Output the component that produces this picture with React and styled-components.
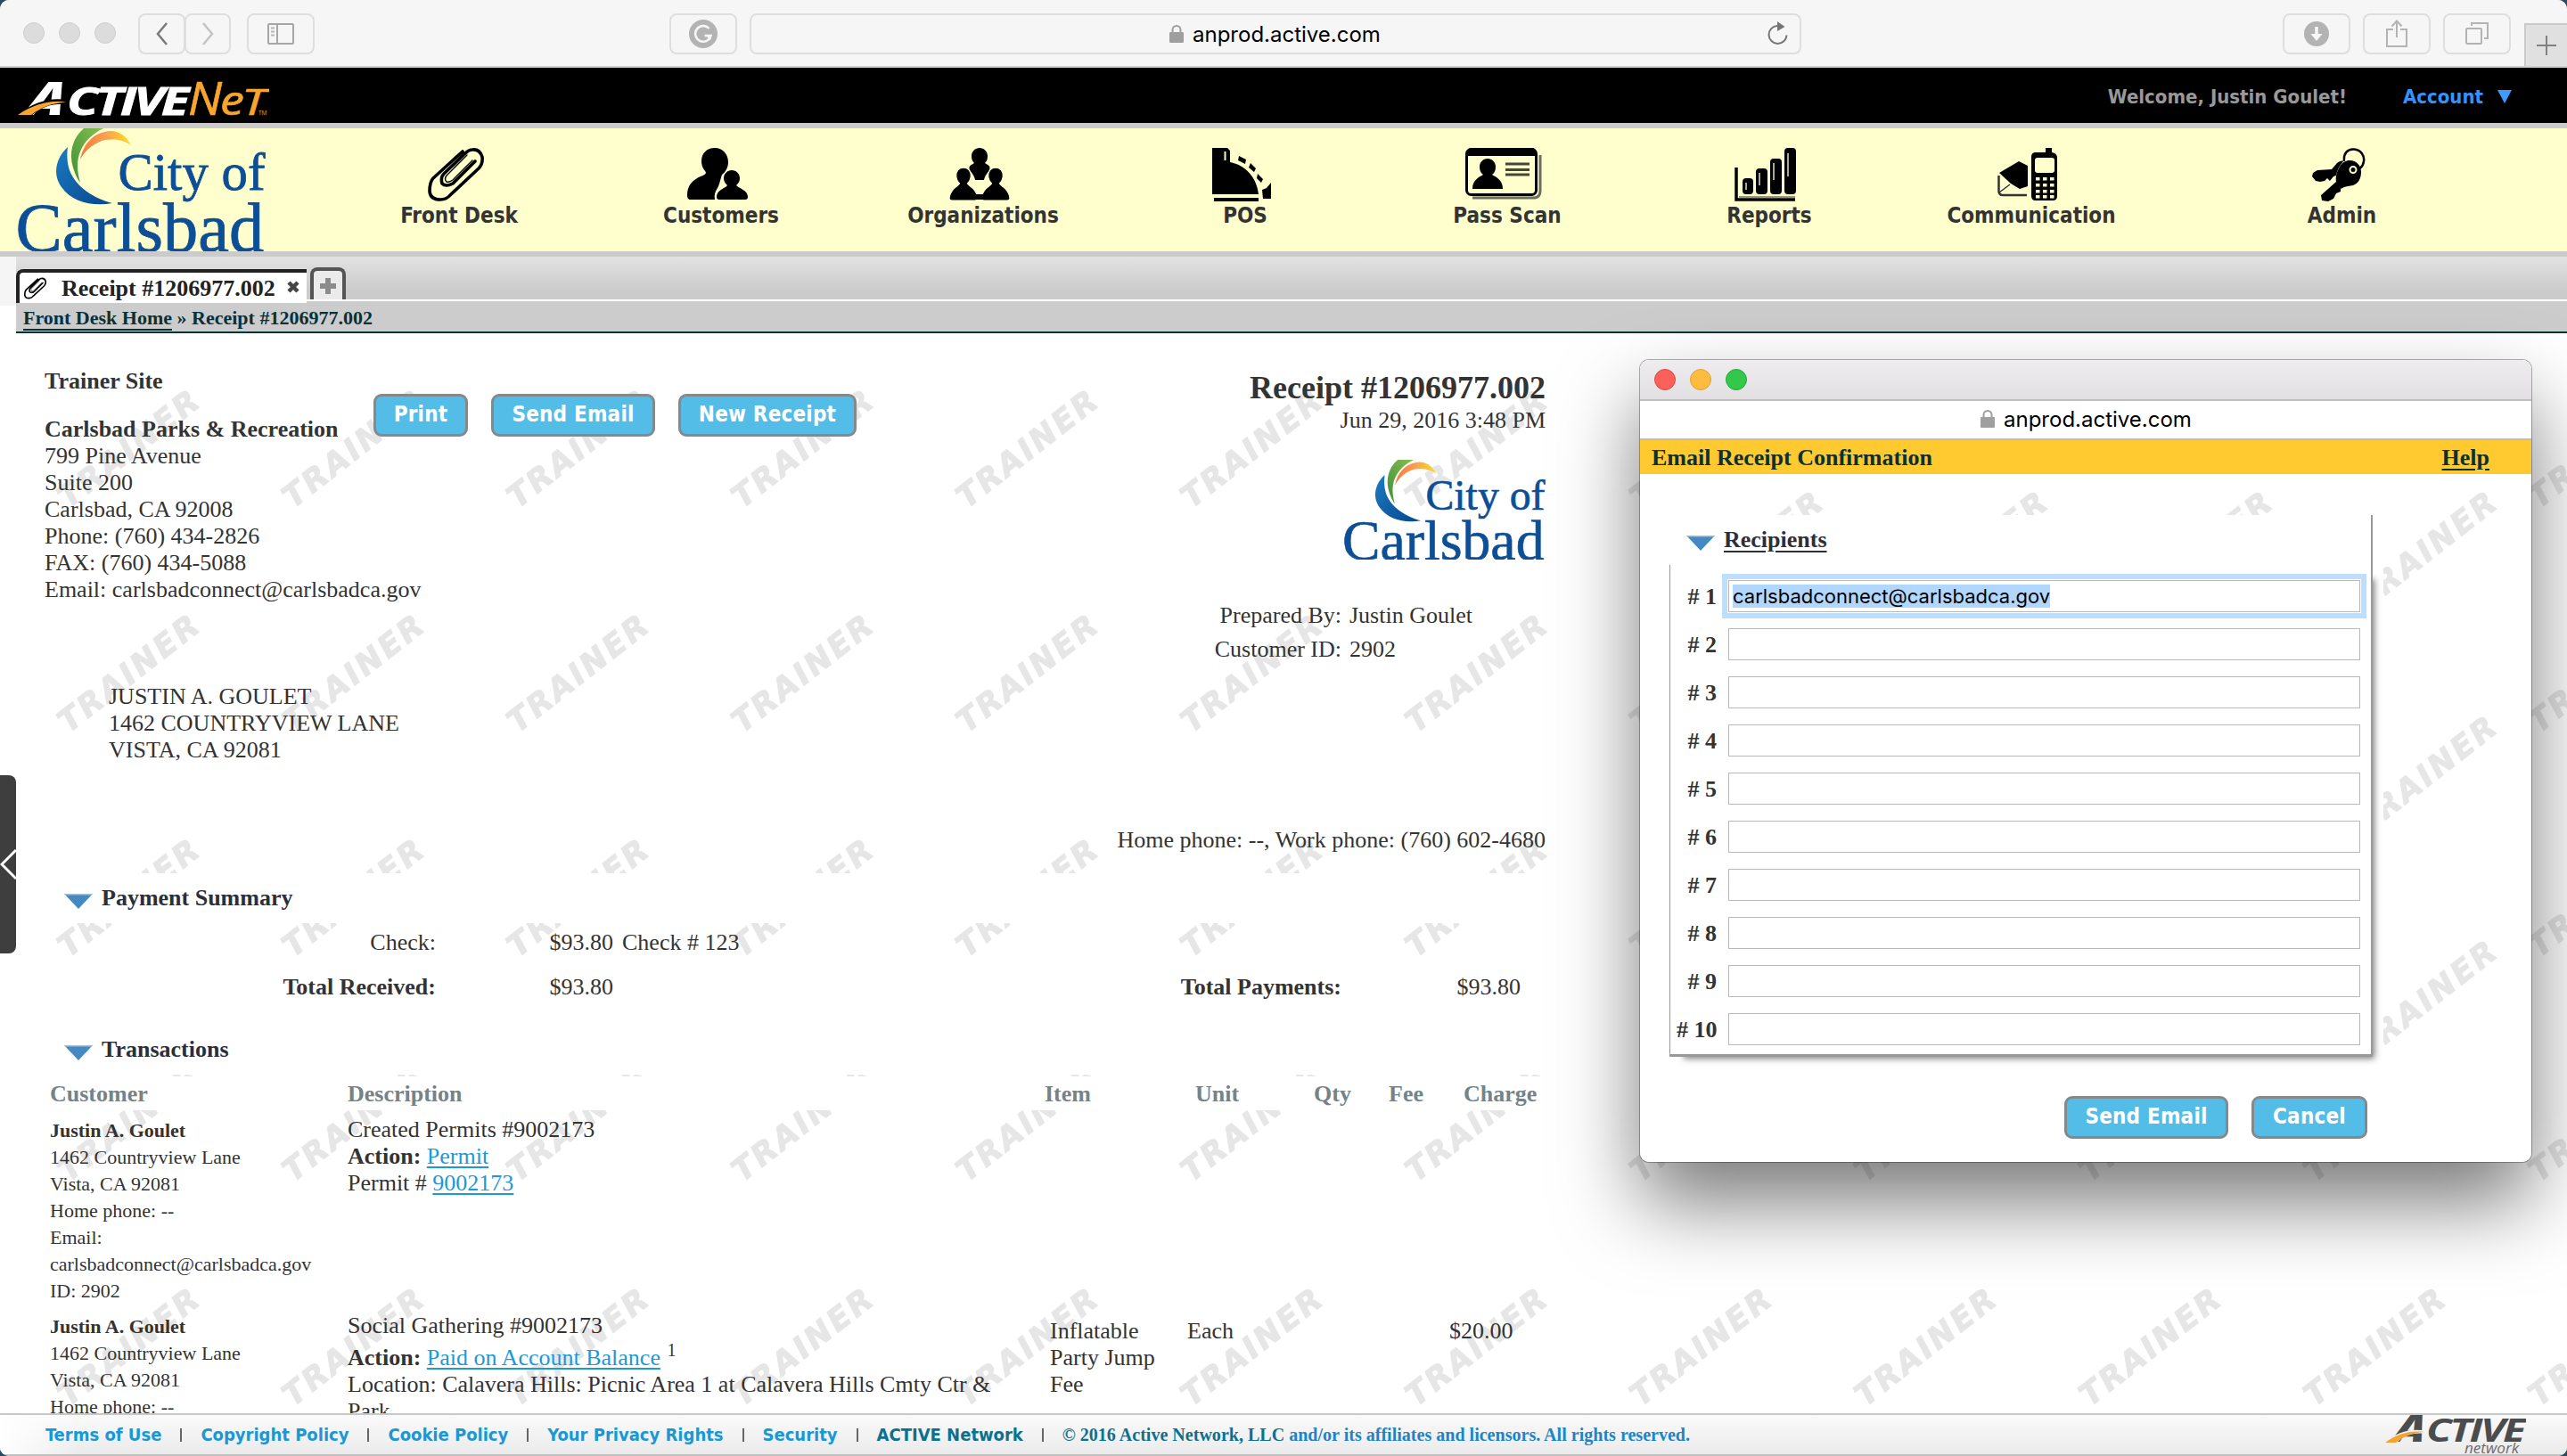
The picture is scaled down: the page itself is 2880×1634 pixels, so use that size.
import React from "react";
import styled, { createGlobalStyle, css } from "styled-components";

const serif = '"Liberation Serif", "Times New Roman", serif';
const tahoma = '"DejaVu Sans Condensed", "DejaVu Sans", Tahoma, sans-serif';
const system = 'Inter, Roboto, sans-serif';

const GlobalStyle = createGlobalStyle`
  *, *::before, *::after { box-sizing: border-box; }
  html, body { margin: 0; padding: 0; background: #2b4a60; }
  svg { display: block; flex: none; }
`;

const BrowserWindow = styled.div`
  position: relative;
  display: flex;
  flex-direction: column;
  width: 2880px;
  height: 1634px;
  overflow: hidden;
  border-radius: 10px;
  background: #fff;
  color: #333;
  font: 26px/30px ${serif};
`;

/* ---------- Browser toolbar ---------- */

const Toolbar = styled.header`
  display: flex;
  flex: none;
  align-items: flex-start;
  height: 76px;
  padding: 15px 0 0 26px;
  background: #f6f6f6;
  border-bottom: 2px solid #d0d1d0;
`;

const Lights = styled.div`
  display: flex;
  gap: 16px;
  padding-top: 10px;
`;

const Light = styled.span`
  width: 24px;
  height: 24px;
  border-radius: 50%;
  background: ${(p) => p.$fill || "#dcdcdc"};
  border: 1px solid ${(p) => p.$edge || "#cecece"};
`;

const ToolButton = styled.div`
  display: flex;
  align-items: center;
  justify-content: center;
  width: ${(p) => p.$w || 76}px;
  height: 46px;
  margin-left: ${(p) => p.$ml || 0}px;
  border: 2px solid #dedede;
  border-radius: 8px;
`;

const AddressField = styled.div`
  display: flex;
  align-items: center;
  width: 1180px;
  height: 46px;
  margin-left: 14px;
  padding: 0 12px 0 469px;
  border: 2px solid #dedede;
  border-radius: 8px;
`;

const Host = styled.span`
  margin-left: 10px;
  padding-top: 2px;
  color: #000;
  font: 24px/30px ${system};
`;

const Reload = styled.div`
  margin-left: auto;
`;

const ToolGroup = styled.div`
  display: flex;
  gap: 14px;
  margin-left: 540px;
`;

const NewTab = styled.div`
  display: flex;
  align-items: center;
  justify-content: center;
  width: 48px;
  height: 48px;
  margin: 11px 0 0 auto;
  background: #e0e0e0;
  border-top: 2px solid #cacaca;
  border-left: 2px solid #cacaca;
`;

/* ---------- Site header ---------- */

const BrandBar = styled.div`
  display: flex;
  flex: none;
  align-items: center;
  height: 62px;
  padding: 0 62px 0 20px;
  background: #000;
`;

const Welcome = styled.span`
  margin: 3px 0 0 auto;
  color: #999;
  font: bold 22px/30px ${tahoma};
`;

const AccountMenu = styled.div`
  display: flex;
  align-items: center;
  gap: 16px;
  margin: 3px 0 0 63px;
  color: #3393ff;
  font: bold 22px/30px ${tahoma};
`;

const MainNav = styled.nav`
  display: flex;
  flex: none;
  height: 150px;
  padding-left: 20px;
  background: #ffffce;
  border-top: 6px solid #cbcbcb;
  border-bottom: 6px solid #cbcbcb;
`;

const NavItems = styled.div`
  display: flex;
  margin-left: 70px;
`;

const NavItem = styled.div`
  display: flex;
  flex-direction: column;
  align-items: center;
  width: ${(p) => p.$w || 294}px;
  padding-top: 22px;
  color: #333;
  font: bold 24px/32px ${tahoma};
  svg { margin-right: 8px; }
`;

const TabStrip = styled.div`
  display: flex;
  flex: none;
  align-items: flex-start;
  height: 50px;
  margin-left: 18px;
  background: linear-gradient(#e2e2e2, #cbcbcb 80%) 0 0 / 100% 48px no-repeat #fff;
`;

const PageTab = styled.div`
  position: relative;
  display: flex;
  align-items: center;
  width: 326px;
  height: 38px;
  margin: 14px 0 -2px;
  padding-left: 5px;
  background: #fff;
  border-top: 4px solid #222;
  border-left: 4px solid #222;
  border-top-left-radius: 8px;
  color: #222;
  font-weight: bold;
  white-space: nowrap;
  svg + span { margin: 2px 13px 0 17px; }
  svg:last-child { margin-top: -3px; }
`;

const AddTab = styled.div`
  display: flex;
  justify-content: center;
  width: 40px;
  height: 36px;
  margin: 12px 0 0 4px;
  padding-top: 8px;
  background: #ebebeb;
  border: 4px solid #555;
  border-bottom: 0;
  border-radius: 8px 8px 0 0;
`;

const Gutter = styled.div`
  flex: none;
  background: linear-gradient(#f5f5f5, #f5f5f5) 0 0 / 18px 55px no-repeat;
`;

const Breadcrumb = styled.div`
  height: 36px;
  margin-left: 18px;
  padding: 3px 0 0 8px;
  background: #ccc;
  border-bottom: 2px solid #0a3239;
  color: #0a3038;
  font: bold 22px/32px ${serif};
`;

const Crumb = styled.span`
  border-bottom: 2px solid #0a3038;
`;

/* ---------- Receipt page ---------- */

const Page = styled.main`
  position: relative;
  flex: none;
  height: 1212px;
  overflow: hidden;
`;

const WatermarkLayer = styled.svg`
  position: absolute;
  inset: 0;
  width: 100%;
  height: 100%;
`;

const Receipt = styled.div`
  position: relative;
  width: 1736px;
`;

const ReceiptHead = styled.section`
  display: flex;
  height: 606px;
  padding: 39px 2px 0 50px;
`;

const SiteColumn = styled.div`
  width: 369px;
  white-space: nowrap;
`;

const SiteName = styled.div`
  margin-bottom: 24px;
  font-weight: bold;
`;

const Strong = styled.b``;

const Lines = styled.div`
  margin: ${(p) => p.$m || 0};
`;

const ButtonRow = styled.div`
  display: flex;
  align-items: flex-start;
  gap: 26px;
  padding-top: ${(p) => p.$pt || 0}px;
`;

const ActionButton = styled.div`
  width: ${(p) => p.$w}px;
  height: 48px;
  background: #53bde8;
  border: 3px solid #85898b;
  border-radius: 9px;
  color: #fff;
  font: bold 24px/40px ${tahoma};
  letter-spacing: 0.2px;
  text-align: center;
`;

const InfoColumn = styled.div`
  display: flex;
  flex: 1;
  flex-direction: column;
  align-items: flex-end;
`;

const ReceiptNumber = styled.div`
  font: bold 36px/44px ${serif};
`;

const LogoSlot = styled.div`
  margin: 29px 0 48px;
`;

const MetaGrid = styled.div`
  display: grid;
  grid-template-columns: auto 220px;
  grid-auto-rows: 38px;
  column-gap: 9px;
  margin-bottom: 176px;
  text-align: right;
`;

const MetaValue = styled.span`
  text-align: left;
`;

const SectionBar = styled.div`
  display: flex;
  height: 56px;
  padding: 13px 0 0 72px;
  background: #fff;
  color: #2b2f3a;
  font-weight: bold;
  svg { margin: 10px 10px 0 0; }
`;

const PaymentTable = styled.div`
  display: grid;
  grid-template-columns: 489px 199px 300px 517px 201px;
  grid-auto-rows: 50px;
  height: 114px;
  padding-top: 7px;
  text-align: right;
`;

const Note = styled.span`
  padding-left: 10px;
  text-align: left;
`;

const rowGrid = css`
  display: grid;
  grid-template-columns: 334px 782px 160px 138px 82px 72px 112px;
  padding-left: 56px;
`;

const TableHead = styled.div`
  ${rowGrid}
  height: 38px;
  margin-top: 2px;
  padding-top: 5px;
  background: #fff;
  color: #738388;
  font-weight: bold;
`;

const Cell = styled.div`
  padding-left: ${(p) => p.$pl || 0}px;
`;

const TableRow = styled.div`
  ${rowGrid}
  height: 220px;
  padding-top: 7px;
`;

const CustomerCell = styled.div`
  padding-top: 1px;
  font-size: 22px;
`;

const DescriptionCell = styled.div`
  max-width: 740px;
`;

const DetailCell = styled.div`
  padding: 6px 10px 0 ${(p) => p.$pl || 0}px;
`;

const Link = styled.span`
  color: #1a9ad6;
  text-decoration: underline;
  text-decoration-thickness: 2px;
  text-underline-offset: 3px;
`;

const ActionLine = styled.div`
  padding-top: ${(p) => p.$pt || 0}px;
`;

const FootnoteMark = styled.sup`
  display: inline-block;
  font-size: 20px;
  line-height: 20px;
  vertical-align: 10px;
  height: 20px;
  margin: -10px 0 0 1px;
`;

const DrawerHandle = styled.div`
  position: absolute;
  left: 0;
  top: 496px;
  display: flex;
  align-items: center;
  width: 18px;
  height: 200px;
  background: #3e3e3e;
  border-radius: 0 8px 8px 0;
`;

/* ---------- Footer ---------- */

const Footer = styled.footer`
  display: flex;
  flex: none;
  height: 48px;
  padding-left: 51px;
  background: linear-gradient(90deg, #fff 0, rgba(255, 255, 255, 0) 90px),
    linear-gradient(#fafafa, #ebebeb);
  border-top: 2px solid #c8c8c8;
  border-bottom: 2px solid #c0c0c0;
`;

const FooterLinks = styled.div`
  display: flex;
  gap: 21px;
  align-items: center;
  color: #1a98d3;
  font: bold 20px/30px ${tahoma};
`;

const Divider = styled.i`
  width: 2px;
  height: 15px;
  background: #666;
`;

const NetworkName = styled.span`
  color: #0c708f;
`;

const Copyright = styled.span`
  color: #1a85c9;
  font: bold 20px/30px ${serif};
  letter-spacing: 0.02px;
`;

const FooterLogo = styled.div`
  margin: 0 46px 0 auto;
`;

/* ---------- Email popup ---------- */

const Popup = styled.aside`
  position: absolute;
  left: 1840px;
  top: 404px;
  display: flex;
  flex-direction: column;
  width: 1000px;
  height: 900px;
  overflow: hidden;
  background: #fff;
  border-radius: 10px;
`;

const PopupShadow = styled.div`
  position: absolute;
  left: 1840px;
  top: 404px;
  width: 1000px;
  height: 900px;
  border-radius: 10px;
  box-shadow: 0 0 0 1px rgba(0, 0, 0, 0.3), 0 46px 90px rgba(0, 0, 0, 0.52);
`;

const TitleBar = styled.div`
  display: flex;
  gap: 16px;
  flex: none;
  height: 46px;
  padding: 10px 16px;
  background: linear-gradient(#eeecee, #e2e0e2);
  border-bottom: 2px solid #c0bfc0;
`;

const PopupAddress = styled.div`
  display: flex;
  flex: none;
  align-items: center;
  height: 44px;
  padding-left: 382px;
  padding-bottom: 2px;
  border-bottom: 2px solid #bdbdbd;
`;

const PopupHeading = styled.div`
  display: flex;
  flex: none;
  justify-content: space-between;
  height: 38px;
  padding: 5px 47px 0 13px;
  background: #ffc930;
  color: #0a3038;
  font-weight: bold;
`;

const Underlined = styled.span`
  text-decoration: underline;
  text-decoration-thickness: 2px;
  text-underline-offset: 4px;
`;

const PopupBody = styled.div`
  position: relative;
  flex: 1;
  padding: 46px 0 0 33px;
`;

const RecipientsPanel = styled.div`
  position: relative;
  width: 801px;
  height: 620px;
  padding-right: 12px;
  background: #fff;
`;

const PanelTitle = styled.div`
  display: flex;
  width: 789px;
  height: 56px;
  padding: 13px 0 0 19px;
  border-right: 2px solid #999;
  color: #2b2f3a;
  font-weight: bold;
  svg { margin: 10px 10px 0 0; }
`;

const PanelRows = styled.div`
  display: flex;
  flex-direction: column;
  gap: 18px;
  width: 789px;
  height: 552px;
  padding: 17px 0 0 7px;
  background: #fff;
  border: 1px solid #999;
  border-top: 0;
  border-width: 0 2px 3px 1px;
  box-shadow: 9px 9px 7px -7px rgba(0, 0, 0, 0.5);
`;

const RecipientRow = styled.label`
  display: flex;
  align-items: center;
  gap: 13px;
  height: 36px;
  font-weight: bold;
`;

const RecipientLabel = styled.span`
  width: 45px;
  padding-top: 1px;
  text-align: right;
  white-space: nowrap;
`;

const Field = styled.div`
  width: 709px;
  height: 36px;
  padding: 4px;
  background: #fff;
  border: 1px solid #b9b9b9;
  box-shadow: ${(p) => (p.$focused ? "0 0 0 1px #fff, 0 0 0 7px #bfdefe" : "none")};
  color: #000;
  font: 22px/26px ${system};
`;

const Selection = styled.span`
  display: inline-block;
  height: 26px;
  background: #b2d7fe;
`;

const PopupButtons = styled.div`
  position: relative;
  display: flex;
  gap: 26px;
  padding: 32px 0 0 443px;
`;

/* ---------- Drawings ---------- */

function Watermark({ id, x, y }) {
  return (
    <WatermarkLayer aria-hidden="true">
      <defs>
        <pattern id={id} width="252" height="252" patternUnits="userSpaceOnUse">
          <text
            transform={`translate(${x} ${y}) rotate(-38) skewX(-10)`}
            fontFamily="DejaVu Sans, Verdana, sans-serif"
            fontWeight="bold"
            fontSize="35"
            letterSpacing="3"
            fill="#e6e6e6"
            stroke="#e6e6e6"
            strokeWidth="1"
          >
            TRAINER
          </text>
        </pattern>
      </defs>
      <rect width="100%" height="100%" fill={`url(#${id})`} />
    </WatermarkLayer>
  );
}

function CarlsbadLogo({ id, width, height }) {
  return (
    <svg width={width} height={height} viewBox="0 0 278 138" preserveAspectRatio="none">
      <defs>
        <linearGradient id={`${id}-b`} x1="0" y1="0" x2="1" y2="1">
          <stop offset="0" stopColor="#1b7cc4" />
          <stop offset="1" stopColor="#08468c" />
        </linearGradient>
        <linearGradient id={`${id}-g`} x1="0" y1="1" x2="1" y2="0">
          <stop offset="0" stopColor="#3f8f3c" />
          <stop offset="1" stopColor="#86c04e" />
        </linearGradient>
        <linearGradient id={`${id}-o`}>
          <stop offset="0" stopColor="#f5793f" />
          <stop offset="0.5" stopColor="#f9a052" />
          <stop offset="1" stopColor="#ffdc24" />
        </linearGradient>
      </defs>
      <path d="M56 21C42 34 39 52 49 66C61 83 84 88 106 84C86 79 65 66 58 47C55 38 55 29 56 21Z" fill={`url(#${id}-b)`} />
      <path d="M74 0C61 11 57 28 62 44C64 51 67 57 70 61C66 47 66 36 70 26C75 14 84 6 96 0Z" fill={`url(#${id}-g)`} />
      <path d="M70 35C74 16 86 4 104 3C114 3 122 9 127 19C117 12 107 12 98 13C86 16 76 24 70 35Z" fill={`url(#${id}-o)`} />
      <g fill="#0d4f96" stroke="#0d4f96" strokeWidth="0.8" fontFamily="Liberation Serif, serif">
        <text x="112.5" y="69" fontSize="58.8">City of</text>
        <text x="-2.5" y="137.5" fontSize="78.4">Carlsbad</text>
      </g>
    </svg>
  );
}

function ActiveNetLogo() {
  return (
    <svg width="282" height="54" viewBox="20 84 282 54" fontFamily="Open Sans, sans-serif" fontStyle="italic">
      <text transform="translate(29 133) skewX(-10)" fontSize="52" fontWeight="800" fill="#fff" textLength="42" lengthAdjust="spacingAndGlyphs">A</text>
      <path d="M18 134C36 119 56 113 74 116L74 121C60 120 48 123 35 134Z" fill="#000" />
      <path d="M20 133C38 121 56 116 74 118.500C58 120 47 124 35 133Z" fill="#f7a52c" />
      <text x="75" y="133" fontSize="43" fontWeight="bold" fill="#fff" stroke="#fff" strokeWidth="0.8" letterSpacing="-2.500" textLength="134" lengthAdjust="spacingAndGlyphs">CTIVE</text>
      <g fill="#f7a52c" stroke="#f7a52c" strokeWidth="0.7">
        <text x="211" y="133" fontSize="51" textLength="38" lengthAdjust="spacingAndGlyphs">N</text>
        <text x="247" y="133" fontSize="45" textLength="27" lengthAdjust="spacingAndGlyphs">e</text>
        <text x="271" y="133" fontSize="41" textLength="28" lengthAdjust="spacingAndGlyphs">T</text>
        <text x="290" y="132.5" fontSize="6.5" fontStyle="normal" strokeWidth="0">TM</text>
      </g>
    </svg>
  );
}

function ActiveNetworkLogo() {
  return (
    <svg width="158" height="44" viewBox="2678 1588 158 44" fontFamily="Open Sans, sans-serif" fontStyle="italic">
      <text transform="translate(2687 1618) skewX(-8)" fontSize="43" fontWeight="800" fill="#4b4c4e" textLength="35" lengthAdjust="spacingAndGlyphs">A</text>
      <path d="M2676 1620C2690 1608 2706 1602 2724 1606L2724 1609C2708 1607 2698 1612 2690 1620Z" fill="#f2f2f2" />
      <path d="M2678 1619C2690 1610 2704 1605 2722 1607C2706 1608 2698 1613 2690 1619Z" fill="#f4a52f" />
      <text x="2724" y="1618" fontSize="36" fontWeight="bold" fill="#4b4c4e" letterSpacing="-2" textLength="109" lengthAdjust="spacingAndGlyphs">CTIVE</text>
      <text x="2767" y="1631" fontSize="17" fill="#6a6b6d" textLength="61" lengthAdjust="spacingAndGlyphs">network</text>
    </svg>
  );
}

const Lock = () => (
  <svg width="16" height="20" viewBox="0 0 16 20">
    <path d="M3.5 9V5.5a4.5 4.5 0 0 1 9 0V9" fill="none" stroke="#9f9f9f" strokeWidth="2" />
    <rect y="8" width="16" height="12" rx="1" fill="#9f9f9f" />
  </svg>
);

const Triangle = () => (
  <svg width="32" height="17" viewBox="0 0 32 17">
    <path d="M0 0H32L16 17Z" fill="#4489c1" />
    <path d="M0 0H32L31 1.5H1Z" fill="#9dc3e2" />
  </svg>
);

function PaperClip({ width, height, wire, line }) {
  return (
    <svg width={width} height={height} viewBox="0 0 63 60" fill="none" strokeLinecap="round" strokeLinejoin="round">
      <path
        d="M39 4L6 34Q2 38 2 49Q3 58 14 58Q21 58 25 53L57 23Q62 18 61 10Q58 1 50 2Q46 2 42 6L18 29Q14 33 16 40Q20 44 28 40L53 15"
        stroke="#000"
        strokeWidth={wire}
      />
      <path d="M44 8L21 31Q18 35 21 38Q24 39 28 36L50 14" stroke="#000" strokeWidth={line} />
    </svg>
  );
}

const Person = ({ x, y, s }) => (
  <g transform={`translate(${x} ${y}) scale(${s})`}>
    <path d="M0 0C8 0 13 6 13 14C13 20 10 25 7 28C8 31 14 33 18 38C22 43 25 50 25 54C25 57 23 58 20 58H-20C-23 58 -25 57 -25 54C-25 50 -22 43 -18 38C-14 33 -8 31 -7 28C-10 25 -13 20 -13 14C-13 6 -8 0 0 0Z" />
  </g>
);

const CustomersIcon = () => (
  <svg width="68" height="60" viewBox="0 0 68 60">
    <path d="M31 0C40 0 46 7 46 16C46 22 43 27 39 30C37 36 36 42 34 45C31 49 30 54 31 58H4C1 58 0 56 0 53C0 42 6 36 15 32C21 30 22 28 20 26C17 22 16 19 16 15C16 6 22 0 31 0Z" />
    <path d="M50 25C55 25 59 29 59 34C59 38 57 40 55 42C57 45 68 47 68 55C68 57 67 58 65 58H36C34 58 33 57 33 55C33 47 42 46 45 42C43 40 41 38 41 34C41 29 45 25 50 25Z" />
  </svg>
);

const OrganizationsIcon = () => (
  <svg width="72" height="60" viewBox="0 0 72 60">
    <path d="M36 0C41 0 45 4 45 9C45 13 44 15 42 17C45 19 49 20 47 25C44 29 42 31 41 36H31C30 31 28 29 25 25C23 20 27 19 30 17C28 15 27 13 27 9C27 4 31 0 36 0Z" />
    <g stroke="#ffffce" strokeWidth="2">
      <Person x={18} y={22} s={0.64} />
      <Person x={54} y={22} s={0.64} />
    </g>
    <path d="M30 52H42V58H30Z" />
  </svg>
);

const PosIcon = () => (
  <svg width="66" height="60" viewBox="0 0 66 60">
    <path d="M0 0H17L20 3V16C37 19 50 33 52 52H0Z" />
    <path d="M14.500 4V14" stroke="#ffffce" strokeWidth="2" />
    <path d="M2 56H52V60H2Z" />
    <path d="M30 9L38 13L37 18L29 14ZM43 17L49 23L47 27L41 22ZM51 29L57 35L55 39L50 34ZM56 47L61 45L66 39V57H57Z" />
  </svg>
);

const PassScanIcon = () => (
  <svg width="86" height="60" viewBox="0 0 86 60">
    <path d="M8 56H78Q84 55 84 48V8" fill="none" stroke="#6e6e5c" strokeWidth="3" />
    <rect x="1.500" y="1.500" width="78" height="51" rx="5" fill="#ffffce" stroke="#000" strokeWidth="3" />
    <path d="M6 0H76Q80 1 80 9H1Q1 1 6 0Z" />
    <path d="M25 12C30 12 34 16 34 21C34 25 33 28 30 30C35 33 42 36 42 46H8C8 36 15 33 20 30C17 28 16 25 16 21C16 16 20 12 25 12Z" />
    <path d="M45 18H72M45 24.500H72M45 30H72" stroke="#45453a" strokeWidth="3" />
  </svg>
);

const ReportsIcon = () => (
  <svg width="70" height="60" viewBox="0 0 70 60">
    <path d="M2 22V58H68" fill="none" stroke="#000" strokeWidth="3.500" />
    <path d="M5 55H68" stroke="#77776a" strokeWidth="1.500" />
    <rect x="9" y="34" width="12" height="18" rx="4" />
    <rect x="24" y="23" width="13" height="29" rx="4" />
    <rect x="40" y="12" width="13" height="40" rx="4" />
    <rect x="56" y="0" width="13" height="52" rx="4" />
    <path d="M13 39V47M28 28V42M44 17V36M60 6V32" stroke="#aaa98a" strokeWidth="2" />
  </svg>
);

const CommunicationIcon = () => (
  <svg width="68" height="60" viewBox="0 0 68 60">
    <path d="M1.500 31V49Q2 53 6 53H33" fill="none" stroke="#333" strokeWidth="2.500" />
    <path d="M2 50L14 41" stroke="#333" strokeWidth="1.500" />
    <path d="M2 28L24 15L34 20V43L25 46L15 40Z" />
    <path d="M54 0H61V5Q67 6 67 11V54Q67 59 62 59H43Q38 59 38 54V10Q38 5 43 5H54Z" />
    <rect x="42" y="11" width="22" height="17" rx="3" fill="#ffffce" />
    <g fill="#ffffce">
      {[33, 40, 47, 53].map((y) =>
        [43, 51, 59].map((x) => <rect key={`${x}-${y}`} x={x} y={y} width="4.500" height="3.500" />)
      )}
    </g>
  </svg>
);

const AdminIcon = () => (
  <svg width="60" height="60" viewBox="0 0 60 60">
    <path d="M36 15C35 6 40 1 47 1.500C55 2 59 9 58 15C57 22 52 25 48 24" fill="none" stroke="#000" strokeWidth="2.500" />
    <path d="M28 17C30 15 34 14 35 15C32 19 29 22 27 31L24 32L20 37L17 34L14 37L9 38L4 37L0 32L1 28L6 25L22 24Z" />
    <path d="M42 14C50 14 55 20 55 27C55 34 52 40 46 42C42 43 38 43 36 44L32 46V49L27 51L24 57L18 60L11 59L10 53L27 38C26 32 28 26 31 21C34 16 38 14 42 14Z" />
    <circle cx="46" cy="24.500" r="3.500" fill="none" stroke="#ffffce" strokeWidth="2" />
  </svg>
);

const navItems = [
  ["Front Desk", <PaperClip key="i" width={63} height={60} wire={3.6} line={1.4} />],
  ["Customers", <CustomersIcon key="i" />],
  ["Organizations", <OrganizationsIcon key="i" />],
  ["POS", <PosIcon key="i" />],
  ["Pass Scan", <PassScanIcon key="i" />],
  ["Reports", <ReportsIcon key="i" />],
  ["Communication", <CommunicationIcon key="i" />],
  ["Admin", <AdminIcon key="i" />, 403],
];

const stroke = (color, width = 2) => ({ fill: "none", stroke: color, strokeWidth: width });

/* ---------- Sections ---------- */

function BrowserToolbar() {
  return (
    <Toolbar>
      <Lights><Light /><Light /><Light /></Lights>
      <ToolButton $w={53} $ml={25}>
        <svg width="14" height="26" viewBox="0 0 14 26"><path d="M12 1L2 13L12 25" {...stroke("#7a7a7a", 2.5)} /></svg>
      </ToolButton>
      <ToolButton $w={52} $ml={-1}>
        <svg width="14" height="26" viewBox="0 0 14 26"><path d="M2 1L12 13L2 25" {...stroke("#c4c4c4", 2.5)} /></svg>
      </ToolButton>
      <ToolButton $ml={18}>
        <svg width="30" height="24" viewBox="0 0 30 24">
          <rect x="1" y="1" width="28" height="22" rx="1" {...stroke("#a6a6a6")} />
          <path d="M11 1V23" {...stroke("#a6a6a6")} />
          <path d="M4 5.500H8M4 9.500H8M4 13.500H8" {...stroke("#b6b6b6")} />
        </svg>
      </ToolButton>
      <ToolButton $ml={398}>
        <svg width="32" height="32" viewBox="0 0 32 32">
          <circle cx="16" cy="16" r="16" fill="#b3b3b3" />
          <path d="M22.500 10A8.800 8.800 0 1 0 24.500 18H17.500M21 18L24 22.500" {...stroke("#f6f6f6", 2.6)} />
        </svg>
      </ToolButton>
      <AddressField>
        <Lock />
        <Host>anprod.active.com</Host>
        <Reload>
          <svg width="24" height="28" viewBox="0 0 24 28">
            <path d="M11 5A10 10 0 1 0 21.500 15.500" {...stroke("#757575")} />
            <path d="M11 0L19.500 6L11 11Z" fill="#757575" />
          </svg>
        </Reload>
      </AddressField>
      <ToolGroup>
        <ToolButton>
          <svg width="28" height="28" viewBox="0 0 28 28">
            <circle cx="14" cy="14" r="14" fill="#b3b3b3" />
            <path d="M12.200 6H15.800V14H20.500L14 22L7.500 14H12.200Z" fill="#f6f6f6" />
          </svg>
        </ToolButton>
        <ToolButton>
          <svg width="24" height="32" viewBox="0 0 24 32">
            <path d="M8 11H1V30H23V11H16M12 20V2M6.500 7.500L12 1.500L17.500 7.500" {...stroke("#b3b3b3")} />
          </svg>
        </ToolButton>
        <ToolButton>
          <svg width="26" height="26" viewBox="0 0 26 26">
            <rect x="1" y="7" width="17" height="17" rx="1" {...stroke("#b3b3b3")} />
            <path d="M7 4V1H25V18H21" {...stroke("#b3b3b3")} />
          </svg>
        </ToolButton>
      </ToolGroup>
      <NewTab>
        <svg width="24" height="24" viewBox="0 0 24 24"><path d="M12 1V23M1 12H23" {...stroke("#808080")} /></svg>
      </NewTab>
    </Toolbar>
  );
}

function SiteHeader() {
  return (
    <>
      <BrandBar>
        <ActiveNetLogo />
        <Welcome>Welcome, Justin Goulet!</Welcome>
        <AccountMenu>
          Account
          <svg width="16" height="15" viewBox="0 0 16 15"><path d="M0 0H16L8 15Z" fill="#3d9bff" /></svg>
        </AccountMenu>
      </BrandBar>
      <MainNav>
        <CarlsbadLogo id="nav" width={278} height={138} />
        <NavItems>
          {navItems.map(([label, icon, width]) => (
            <NavItem key={label} $w={width}>
              {icon}
              {label}
            </NavItem>
          ))}
        </NavItems>
      </MainNav>
      <Gutter>
        <TabStrip>
          <PageTab>
            <PaperClip width={25} height={25} wire={4} line={1.5} />
            <span>Receipt #1206977.002</span>
            <svg width="14" height="14" viewBox="0 0 14 14"><path d="M2 2L12 12M12 2L2 12" {...stroke("#444", 4.5)} /></svg>
          </PageTab>
          <AddTab>
            <svg width="18" height="18" viewBox="0 0 18 18"><path d="M9 0V18M0 9H18" {...stroke("#8b8b8b", 6)} /></svg>
          </AddTab>
        </TabStrip>
        <Breadcrumb>
          <Crumb>Front Desk Home</Crumb> » Receipt #1206977.002
        </Breadcrumb>
      </Gutter>
    </>
  );
}

function CustomerLines() {
  return (
    <CustomerCell>
      <Strong>Justin A. Goulet</Strong>
      <div>1462 Countryview Lane</div>
      <div>Vista, CA 92081</div>
      <div>Home phone: --</div>
      <div>Email:</div>
      <div>carlsbadconnect@carlsbadca.gov</div>
      <div>ID: 2902</div>
    </CustomerCell>
  );
}

function ReceiptPage() {
  return (
    <Page>
      <Watermark id="page-mark" x={75} y={199} />
      <Receipt>
        <ReceiptHead>
          <SiteColumn>
            <SiteName>Trainer Site</SiteName>
            <Lines>
              <Strong>Carlsbad Parks &amp; Recreation</Strong>
              <div>799 Pine Avenue</div>
              <div>Suite 200</div>
              <div>Carlsbad, CA 92008</div>
              <div>Phone: (760) 434-2826</div>
              <div>FAX: (760) 434-5088</div>
              <div>Email: carlsbadconnect@carlsbadca.gov</div>
            </Lines>
            <Lines $m="90px 0 0 72px">
              <div>JUSTIN A. GOULET</div>
              <div>1462 COUNTRYVIEW LANE</div>
              <div>VISTA, CA 92081</div>
            </Lines>
          </SiteColumn>
          <ButtonRow $pt={29}>
            <ActionButton $w={106}>Print</ActionButton>
            <ActionButton $w={184}>Send Email</ActionButton>
            <ActionButton $w={200}>New Receipt</ActionButton>
          </ButtonRow>
          <InfoColumn>
            <ReceiptNumber>Receipt #1206977.002</ReceiptNumber>
            <div>Jun 29, 2016 3:48 PM</div>
            <LogoSlot><CarlsbadLogo id="receipt" width={226} height={112} /></LogoSlot>
            <MetaGrid>
              <span>Prepared By:</span><MetaValue>Justin Goulet</MetaValue>
              <span>Customer ID:</span><MetaValue>2902</MetaValue>
            </MetaGrid>
            <div>Home phone: --, Work phone: (760) 602-4680</div>
          </InfoColumn>
        </ReceiptHead>

        <SectionBar><Triangle />Payment Summary</SectionBar>
        <PaymentTable>
          <span>Check:</span><span>$93.80</span><Note>Check # 123</Note><span /><span />
          <Strong>Total Received:</Strong><span>$93.80</span><span /><Strong>Total Payments:</Strong><span>$93.80</span>
        </PaymentTable>

        <SectionBar><Triangle />Transactions</SectionBar>
        <TableHead>
          <Cell>Customer</Cell>
          <Cell>Description</Cell>
          <Cell>Item</Cell>
          <Cell $pl={9}>Unit</Cell>
          <Cell $pl={4}>Qty</Cell>
          <Cell $pl={6}>Fee</Cell>
          <Cell $pl={18}>Charge</Cell>
        </TableHead>
        <TableRow>
          <CustomerLines />
          <DescriptionCell>
            <div>Created Permits #9002173</div>
            <div><Strong>Action:</Strong> <Link>Permit</Link></div>
            <div>Permit # <Link>9002173</Link></div>
          </DescriptionCell>
        </TableRow>
        <TableRow>
          <CustomerLines />
          <DescriptionCell>
            <div>Social Gathering #9002173</div>
            <ActionLine $pt={6}>
              <Strong>Action:</Strong> <Link>Paid on Account Balance</Link> <FootnoteMark>1</FootnoteMark>
            </ActionLine>
            <div>Location: Calavera Hills: Picnic Area 1 at Calavera Hills Cmty Ctr &amp; Park</div>
          </DescriptionCell>
          <DetailCell $pl={6}>Inflatable Party Jump Fee</DetailCell>
          <DetailCell>Each</DetailCell>
          <DetailCell />
          <DetailCell />
          <DetailCell $pl={2}>$20.00</DetailCell>
        </TableRow>
      </Receipt>
      <DrawerHandle>
        <svg width="18" height="34" viewBox="0 0 18 34"><path d="M18 1L2 17L18 33" {...stroke("#fff", 3)} /></svg>
      </DrawerHandle>
    </Page>
  );
}

const footerLinks = ["Terms of Use", "Copyright Policy", "Cookie Policy", "Your Privacy Rights", "Security"];

function SiteFooter() {
  return (
    <Footer>
      <FooterLinks>
        {footerLinks.map((label) => (
          <React.Fragment key={label}>
            <span>{label}</span>
            <Divider />
          </React.Fragment>
        ))}
        <NetworkName>ACTIVE Network</NetworkName>
        <Divider />
        <Copyright>
          <NetworkName>© 2016 Active Network, LLC</NetworkName> and/or its affiliates and licensors. All rights reserved.
        </Copyright>
      </FooterLinks>
      <FooterLogo><ActiveNetworkLogo /></FooterLogo>
    </Footer>
  );
}

function EmailPopup() {
  return (
    <>
      <PopupShadow />
      <Popup>
        <TitleBar>
          <Light $fill="#fc605b" $edge="#e2463f" />
          <Light $fill="#fdbc40" $edge="#dfa032" />
          <Light $fill="#34c84a" $edge="#24a836" />
        </TitleBar>
        <PopupAddress>
          <Lock />
          <Host>anprod.active.com</Host>
        </PopupAddress>
        <PopupHeading>
          <span>Email Receipt Confirmation</span>
          <Underlined>Help</Underlined>
        </PopupHeading>
        <PopupBody>
          <Watermark id="popup-mark" x={56.5} y={155} />
          <RecipientsPanel>
            <PanelTitle><Triangle /><Underlined>Recipients</Underlined></PanelTitle>
            <PanelRows>
              {Array.from({ length: 10 }, (_, i) => (
                <RecipientRow key={i}>
                  <RecipientLabel># {i + 1}</RecipientLabel>
                  <Field $focused={i === 0}>
                    {i === 0 && <Selection>carlsbadconnect@carlsbadca.gov</Selection>}
                  </Field>
                </RecipientRow>
              ))}
            </PanelRows>
          </RecipientsPanel>
          <PopupButtons>
            <ActionButton $w={184}>Send Email</ActionButton>
            <ActionButton $w={130}>Cancel</ActionButton>
          </PopupButtons>
        </PopupBody>
      </Popup>
    </>
  );
}

export default function App() {
  return (
    <>
      <GlobalStyle />
      <BrowserWindow>
        <BrowserToolbar />
        <SiteHeader />
        <ReceiptPage />
        <SiteFooter />
        <EmailPopup />
      </BrowserWindow>
    </>
  );
}
